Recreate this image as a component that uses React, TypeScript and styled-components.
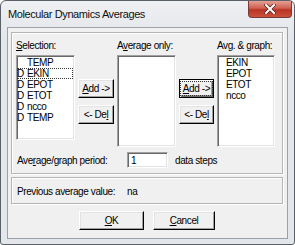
import React from 'react';
import styled, { createGlobalStyle } from 'styled-components';

const GlobalStyle = createGlobalStyle`
  html, body {
    margin: 0;
    padding: 0;
    background: #ffffff;
  }
  body {
    font-family: "Liberation Sans", Arial, sans-serif;
  }
`;

const Window = styled.div`
  box-sizing: border-box;
  width: 295px;
  height: 245px;
  border: 1px solid #5b6169;
  border-radius: 6px 6px 3px 3px;
  background: linear-gradient(#eef0f3, #e3e6ea 40px, #e3e6ea);
  padding: 0 6px 5px 6px;
  display: flex;
  flex-direction: column;
`;

const TitleBar = styled.div`
  height: 26px;
  display: flex;
  align-items: flex-start;
`;

const Title = styled.div`
  font-size: 11px;
  letter-spacing: -0.4px;
  color: #111;
  padding: 7px 0 0 1px;
  flex: 1;
`;

const CloseButton = styled.div`
  width: 44px;
  height: 17px;
  margin-right: -4px;
  border: 1px solid #7a3a35;
  border-top: none;
  border-radius: 0 0 4px 4px;
  background: linear-gradient(#e2a194, #cf5f50 45%, #b83424 55%, #c9523c);
  display: flex;
  align-items: center;
  justify-content: center;
  box-sizing: border-box;
`;

const Client = styled.div`
  box-sizing: border-box;
  flex: 1;
  border: 1px solid #9aa1a9;
  background: #f0f0f0;
  padding: 4px 3px 0 3px;
  display: flex;
  flex-direction: column;
  font-size: 10px;
  letter-spacing: -0.4px;
  color: #000;
`;

const GroupBox = styled.div<{ $h: number; $mt?: number }>`
  box-sizing: border-box;
  height: ${p => p.$h}px;
  width: 272px;
  margin-top: ${p => p.$mt ?? 0}px;
  border: 1px solid #b5b5b5;
  box-shadow: inset 1px 1px 0 #fff, 1px 1px 0 #fff;
  padding: 6px 4px 0 5px;
`;

const ListGrid = styled.div`
  display: grid;
  grid-template-columns: 59px 36px 59px 35px 58px;
  grid-template-rows: 13px auto;
  column-gap: 3px;
  row-gap: 3px;
  align-items: start;
  margin-left: -1px;
`;

const Label = styled.div`
  line-height: 13px;
  white-space: nowrap;
`;

const U = styled.span`
  text-decoration: underline;
  text-underline-offset: 1px;
`;

const ListBox = styled.div<{ $h: number }>`
  box-sizing: border-box;
  height: ${p => p.$h}px;
  background: #fff;
  border: 1px solid;
  border-color: #a0a0a0 #fff #fff #a0a0a0;
  box-shadow: inset 1px 1px 0 #696969, inset -1px -1px 0 #e3e3e3;
  padding: 1px 1px 0 0;
`;

const Item = styled.div<{ $focus?: boolean }>`
  height: 11px;
  line-height: 11px;
  display: flex;
  white-space: nowrap;
  outline: ${p => (p.$focus ? '1px dotted #333' : 'none')};
  outline-offset: -1px;
`;

const Flag = styled.span<{ $w: number }>`
  width: ${p => p.$w}px;
  flex-shrink: 0;
`;

const ButtonStack = styled.div`
  display: flex;
  flex-direction: column;
  gap: 7px;
  padding-top: 24px;
`;

const Button = styled.div<{ $w?: number; $default?: boolean }>`
  box-sizing: border-box;
  width: ${p => (p.$w ? `${p.$w}px` : '100%')};
  height: 19px;
  background: #f0f0f0;
  border: 1px solid;
  border-color: ${p => (p.$default ? '#000' : '#fff #000 #000 #fff')};
  box-shadow: ${p =>
    p.$default
      ? 'inset 1px 1px 0 #fff, inset -1px -1px 0 #696969, inset -2px -2px 0 #a0a0a0'
      : 'inset -1px -1px 0 #a0a0a0, inset 1px 1px 0 #e3e3e3'};
  display: flex;
  align-items: center;
  justify-content: center;
  white-space: nowrap;
  font-size: 10px;
`;

const FocusText = styled.span`
  outline: 1px dotted #333;
  outline-offset: 1px;
  padding: 0 1px;
`;

const FieldRow = styled.div`
  display: flex;
  align-items: center;
  margin-top: 5px;
  height: 16px;
`;

const FieldLabel = styled.div`
  width: 110px;
  white-space: nowrap;
`;

const TextInput = styled.div`
  box-sizing: border-box;
  width: 41px;
  height: 16px;
  background: #fff;
  border: 1px solid;
  border-color: #a0a0a0 #fff #fff #a0a0a0;
  box-shadow: inset 1px 1px 0 #696969, inset -1px -1px 0 #e3e3e3;
  padding: 2px 0 0 3px;
  line-height: 11px;
  margin-right: 7px;
`;

const InfoRow = styled.div`
  display: flex;
  align-items: center;
  height: 100%;
  padding-bottom: 5px;
  box-sizing: border-box;
`;

const ButtonRow = styled.div`
  display: flex;
  justify-content: center;
  gap: 9px;
  margin-top: 7px;
  padding-right: 1px;
`;

const CloseGlyph = () => (
  <svg width="12" height="10" viewBox="0 0 12 10">
    <path d="M2 1 L10 9 M10 1 L2 9" stroke="#5a1f18" strokeWidth="3.4" strokeLinecap="square" />
    <path d="M2 1 L10 9 M10 1 L2 9" stroke="#fff" strokeWidth="2" strokeLinecap="square" />
  </svg>
);

const selection = [
  { flag: '', name: 'TEMP' },
  { flag: 'D', name: 'EKIN', focus: true },
  { flag: 'D', name: 'EPOT' },
  { flag: 'D', name: 'ETOT' },
  { flag: 'D', name: 'ncco' },
  { flag: 'D', name: 'TEMP' },
];

const graphed = ['EKIN', 'EPOT', 'ETOT', 'ncco'];

export default function App() {
  return (
    <>
      <GlobalStyle />
      <Window>
        <TitleBar>
          <Title>Molecular Dynamics Averages</Title>
          <CloseButton>
            <CloseGlyph />
          </CloseButton>
        </TitleBar>
        <Client>
          <GroupBox $h={142}>
            <ListGrid>
              <Label>
                <U>S</U>election:
              </Label>
              <span />
              <Label>
                A<U>v</U>erage only:
              </Label>
              <span />
              <Label>Avg. &amp; graph:</Label>

              <ListBox $h={85}>
                {selection.map((it, i) => (
                  <Item key={i} $focus={it.focus}>
                    <Flag $w={10}>{it.flag}</Flag>
                    {it.name}
                  </Item>
                ))}
              </ListBox>
              <ButtonStack>
                <Button>
                  <U>A</U>dd -&gt;
                </Button>
                <Button>
                  &lt;- De<U>l</U>
                </Button>
              </ButtonStack>
              <ListBox $h={92} />
              <ButtonStack>
                <Button $default>
                  <FocusText>
                    <U>A</U>dd -&gt;
                  </FocusText>
                </Button>
                <Button>
                  &lt;- De<U>l</U>
                </Button>
              </ButtonStack>
              <ListBox $h={92}>
                {graphed.map(name => (
                  <Item key={name}>
                    <Flag $w={8} />
                    {name}
                  </Item>
                ))}
              </ListBox>
            </ListGrid>
            <FieldRow>
              <FieldLabel>
                Ave<U>r</U>age/graph period:
              </FieldLabel>
              <TextInput>1</TextInput>
              <span>data steps</span>
            </FieldRow>
          </GroupBox>
          <GroupBox $h={27} $mt={3}>
            <InfoRow>
              <FieldLabel>Previous average value:</FieldLabel>
              <span>na</span>
            </InfoRow>
          </GroupBox>
          <ButtonRow>
            <Button $w={65}>
              <U>O</U>K
            </Button>
            <Button $w={62}>
              <U>C</U>ancel
            </Button>
          </ButtonRow>
        </Client>
      </Window>
    </>
  );
}
